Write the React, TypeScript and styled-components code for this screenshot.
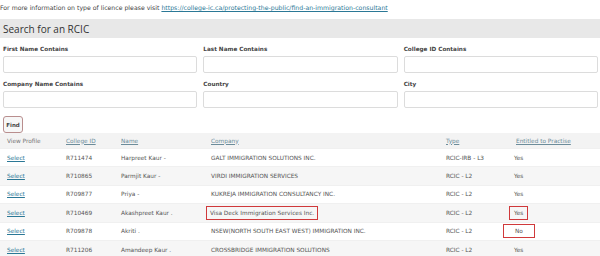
import styled, { createGlobalStyle } from "styled-components";

const GlobalStyle = createGlobalStyle`
  body {
    margin: 0;
    background: #fff;
    font-family: "DejaVu Sans", Verdana, sans-serif;
    color: #333;
  }
`;

const Page = styled.div`
  width: 600px;
  height: 256px;
  overflow: hidden;
`;

const Notice = styled.p`
  margin: 0;
  padding: 4px 0 0 0;
  height: 15px;
  box-sizing: border-box;
  font-size: 6.2px;
  line-height: 8px;
  color: #444;
  white-space: nowrap;
  a {
    color: #2b7896;
    text-decoration: underline;
  }
`;

const TitleBar = styled.div`
  height: 19px;
  margin-top: 4px;
  padding-left: 3px;
  background: #e8e8e8;
  display: flex;
  align-items: center;
  font-family: "Open Sans", sans-serif;
  font-size: 10px;
  color: #333;
`;

const Form = styled.div`
  display: grid;
  grid-template-columns: repeat(3, 1fr);
  column-gap: 6px;
  row-gap: 8px;
  padding: 8px 2px 0 3px;
`;

const Field = styled.div`
  display: flex;
  flex-direction: column;
  gap: 4px;
`;

const Label = styled.label`
  font-family: "DejaVu Sans", Verdana, sans-serif;
  font-weight: bold;
  font-size: 5.7px;
  line-height: 6px;
  color: #444;
  height: 6px;
`;

const Input = styled.div`
  height: 15px;
  border: 1px solid #dcdcdc;
  border-radius: 2px;
  background: #fff;
`;

const FindButton = styled.button`
  display: block;
  margin: 8px 0 0 3px;
  width: 20px;
  height: 17px;
  padding: 0;
  border: 1px solid #b98e8e;
  border-radius: 3px;
  background: #f7f7f7;
  font-family: "DejaVu Sans", Verdana, sans-serif;
  font-weight: bold;
  font-size: 5.5px;
  color: #444;
`;

const Table = styled.table`
  width: 600px;
  border-collapse: collapse;
  font-size: 5.8px;
  color: #555;
  th {
    font-weight: normal;
    text-align: left;
    background: #f3f3f3;
    height: 15px;
    padding: 0 0 0 7px;
    color: #777;
    white-space: nowrap;
  }
  th u {
    color: #6c8c9a;
  }
  td {
    height: 17.4px;
    padding: 0 0 0 7px;
    border-top: 1px solid #f0f0f0;
    white-space: nowrap;
  }
`;

const Row = styled.tr<{ $shade: boolean }>`
  background: ${(p) => (p.$shade ? "#f6f6f6" : "#fff")};
`;

const SelectLink = styled.a`
  color: #2b7896;
  text-decoration: underline;
`;

const Entitled = styled.td`
  && {
    padding-left: 5px;
  }
`;

const Marked = styled.span<{ $pad: number; $shift: number }>`
  display: inline-block;
  border: 1.5px solid #d0393b;
  padding: 3px ${(p) => p.$pad}px;
  margin-left: ${(p) => -p.$shift}px;
  line-height: 6px;
`;

const rows = [
  ["R711474", "Harpreet Kaur -", "GALT IMMIGRATION SOLUTIONS INC.", "RCIC-IRB - L3", "Yes"],
  ["R710865", "Parmjit Kaur -", "VIRDI IMMIGRATION SERVICES", "RCIC - L2", "Yes"],
  ["R709877", "Priya -", "KUKREJA IMMIGRATION CONSULTANCY INC.", "RCIC - L2", "Yes"],
  ["R710469", "Akashpreet Kaur .", "Visa Deck Immigration Services Inc.", "RCIC - L2", "Yes"],
  ["R709878", "Akriti .", "NSEW(NORTH SOUTH EAST WEST) IMMIGRATION INC.", "RCIC - L2", "No"],
  ["R711206", "Amandeep Kaur .", "CROSSBRIDGE IMMIGRATION SOLUTIONS", "RCIC - L2", "Yes"],
];

export default function App() {
  return (
    <Page>
      <GlobalStyle />
      <Notice>
        For more information on type of licence please visit{" "}
        <a href="#">https://college-ic.ca/protecting-the-public/find-an-immigration-consultant</a>
      </Notice>
      <TitleBar>Search for an RCIC</TitleBar>
      <Form>
        {["First Name Contains", "Last Name Contains", "College ID Contains", "Company Name Contains", "Country", "City"].map(
          (l) => (
            <Field key={l}>
              <Label>{l}</Label>
              <Input />
            </Field>
          )
        )}
      </Form>
      <FindButton>Find</FindButton>
      <Table>
        <colgroup>
          <col style={{ width: 59 }} />
          <col style={{ width: 55 }} />
          <col style={{ width: 90 }} />
          <col style={{ width: 235 }} />
          <col style={{ width: 70 }} />
          <col />
        </colgroup>
        <thead>
          <tr>
            <th>View Profile</th>
            <th><u>College ID</u></th>
            <th><u>Name</u></th>
            <th><u>Company</u></th>
            <th><u>Type</u></th>
            <th style={{ paddingLeft: 7 }}><u>Entitled to Practise</u></th>
          </tr>
        </thead>
        <tbody>
          {rows.map(([id, name, company, type, ok], i) => (
            <Row key={id} $shade={i % 2 === 1}>
              <td><SelectLink href="#">Select</SelectLink></td>
              <td>{id}</td>
              <td>{name}</td>
              <td>{i === 3 ? <Marked $pad={3} $shift={5}>{company}</Marked> : company}</td>
              <td>{type}</td>
              <Entitled>
                {i === 3 ? (
                  <Marked $pad={4} $shift={5}>{ok}</Marked>
                ) : i === 4 ? (
                  <Marked $pad={11} $shift={11}>{ok}</Marked>
                ) : (
                  ok
                )}
              </Entitled>
            </Row>
          ))}
        </tbody>
      </Table>
    </Page>
  );
}
